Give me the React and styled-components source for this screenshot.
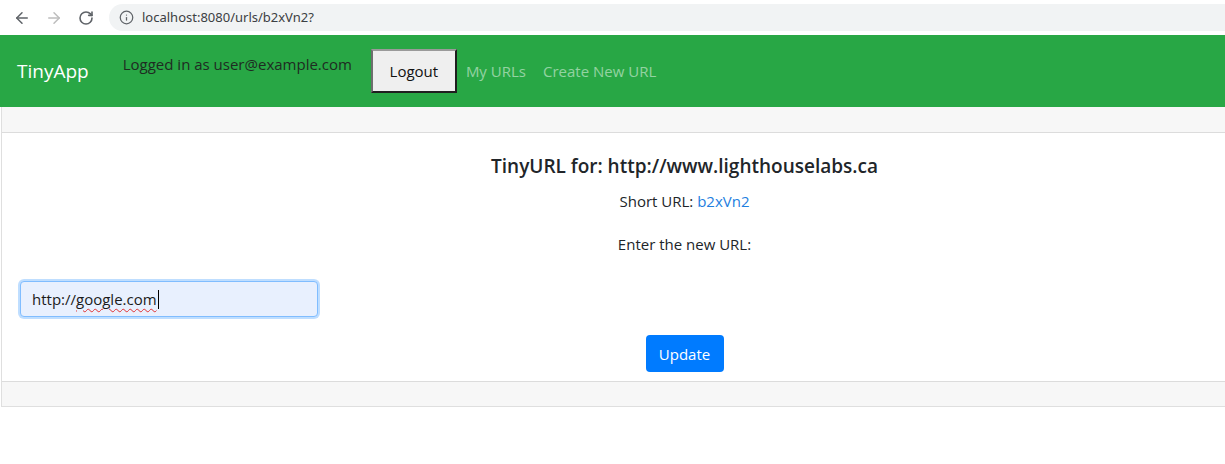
import React from "react";
import styled, { createGlobalStyle } from "styled-components";
import { ArrowLeft, ArrowRight, RotateCw, Info } from "lucide-react";

const GlobalStyle = createGlobalStyle`
  html, body {
    margin: 0;
    padding: 0;
    overflow: hidden;
    background: #fff;
  }
  body {
    font-family: "Open Sans", "Noto Sans", sans-serif;
    color: #212529;
  }
`;

const App = () => {
  return (
    <Page>
      <GlobalStyle />
      <BrowserBar>
        <NavIcon><ArrowLeft size={18} strokeWidth={2} /></NavIcon>
        <NavIcon $muted><ArrowRight size={18} strokeWidth={2} /></NavIcon>
        <NavIcon><RotateCw size={16} strokeWidth={2.4} /></NavIcon>
        <Omnibox>
          <Info size={15} strokeWidth={2} />
          <span>localhost:8080/urls/b2xVn2?</span>
        </Omnibox>
      </BrowserBar>

      <Navbar>
        <Brand>TinyApp</Brand>
        <LoggedIn>Logged in as user@example.com</LoggedIn>
        <LogoutButton>Logout</LogoutButton>
        <NavLink href="#">My URLs</NavLink>
        <NavLink href="#">Create New URL</NavLink>
      </Navbar>

      <Card>
        <CardBand />
        <CardBody>
          <Title>TinyURL for: http://www.lighthouselabs.ca</Title>
          <Line $gap={19}>
            Short URL: <a href="#">b2xVn2</a>
          </Line>
          <Line $gap={25}>Enter the new URL:</Line>
          <UrlField role="textbox">
            http://<Misspelled>google.com</Misspelled>
            <Caret />
          </UrlField>
          <UpdateButton>Update</UpdateButton>
        </CardBody>
        <CardBand $bottom />
      </Card>
    </Page>
  );
};

export default App;

const Page = styled.div`
  width: 1368px;
`;

const BrowserBar = styled.div`
  height: 35px;
  display: flex;
  align-items: center;
  padding-left: 13px;
  background: #fff;
  box-sizing: border-box;
`;

const NavIcon = styled.div`
  width: 18px;
  height: 18px;
  display: flex;
  align-items: center;
  justify-content: center;
  margin-right: 14px;
  color: ${(p) => (p.$muted ? "#bdbdbd" : "#5f6368")};
`;

const Omnibox = styled.div`
  flex: 1;
  height: 27px;
  border-radius: 14px;
  background: #f1f3f4;
  display: flex;
  align-items: center;
  padding-left: 10px;
  gap: 8px;
  color: #5f6368;

  span {
    font-family: "Noto Sans", "Open Sans", sans-serif;
    font-size: 13px;
    color: #3c4043;
    margin-top: -1px;
  }
`;

const Navbar = styled.nav`
  height: 72px;
  background: #28a745;
  display: flex;
  align-items: center;
  padding-left: 17px;
  box-sizing: border-box;
`;

const Brand = styled.div`
  font-size: 19px;
  color: #fff;
  margin-right: 34px;
`;

const LoggedIn = styled.div`
  font-size: 15px;
  color: #1f2b22;
  margin-top: -14px;
  margin-right: 19px;
`;

const LogoutButton = styled.button`
  width: 86px;
  height: 44px;
  background: #efefef;
  border: 2px solid;
  border-color: #9a9a9a #1f1f1f #1f1f1f #6e6e6e;
  font-family: inherit;
  font-size: 15px;
  color: #111;
  margin-right: 9px;
  padding: 0;
`;

const NavLink = styled.a`
  font-size: 15px;
  color: rgba(255, 255, 255, 0.5);
  text-decoration: none;
  margin-right: 17px;
`;

const Card = styled.div`
  margin-left: 1px;
  border: 1px solid rgba(0, 0, 0, 0.125);
  border-top: none;
`;

const CardBand = styled.div`
  height: ${(p) => (p.$bottom ? 24 : 25)}px;
  background: #f7f7f7;
  border-top: ${(p) => (p.$bottom ? "1px solid #dcdcdc" : "none")};
  border-bottom: ${(p) => (p.$bottom ? "none" : "1px solid #dcdcdc")};
`;

const CardBody = styled.div`
  padding: 21px 18px 9px;
  text-align: center;
  background: #fff;
`;

const Title = styled.div`
  font-size: 19px;
  font-weight: 600;
  line-height: 24px;
  color: #212529;
  margin-bottom: 11px;
`;

const Line = styled.p`
  margin: 0 0 ${(p) => p.$gap}px;
  font-size: 15px;
  line-height: 24px;

  a {
    color: #1f7fe0;
    text-decoration: none;
  }
`;

const UrlField = styled.div`
  width: 298px;
  height: 36px;
  box-sizing: border-box;
  border: 1px solid #80bdff;
  border-radius: 4px;
  background: #e8f0fe;
  box-shadow: 0 0 0 2px rgba(0, 123, 255, 0.25);
  text-align: left;
  padding-left: 11px;
  display: flex;
  align-items: center;
  font-size: 15px;
  color: #1b1b1b;
  margin-bottom: 18px;
`;

const Misspelled = styled.span`
  text-decoration: underline wavy #e03131;
  text-decoration-thickness: 1px;
  text-underline-offset: 3px;
`;

const Caret = styled.span`
  width: 1px;
  height: 19px;
  background: #000;
  margin-left: 1px;
`;

const UpdateButton = styled.button`
  width: 78px;
  height: 37px;
  background: #007bff;
  border: none;
  border-radius: 4px;
  color: #fff;
  font-family: inherit;
  font-size: 15px;
`;
